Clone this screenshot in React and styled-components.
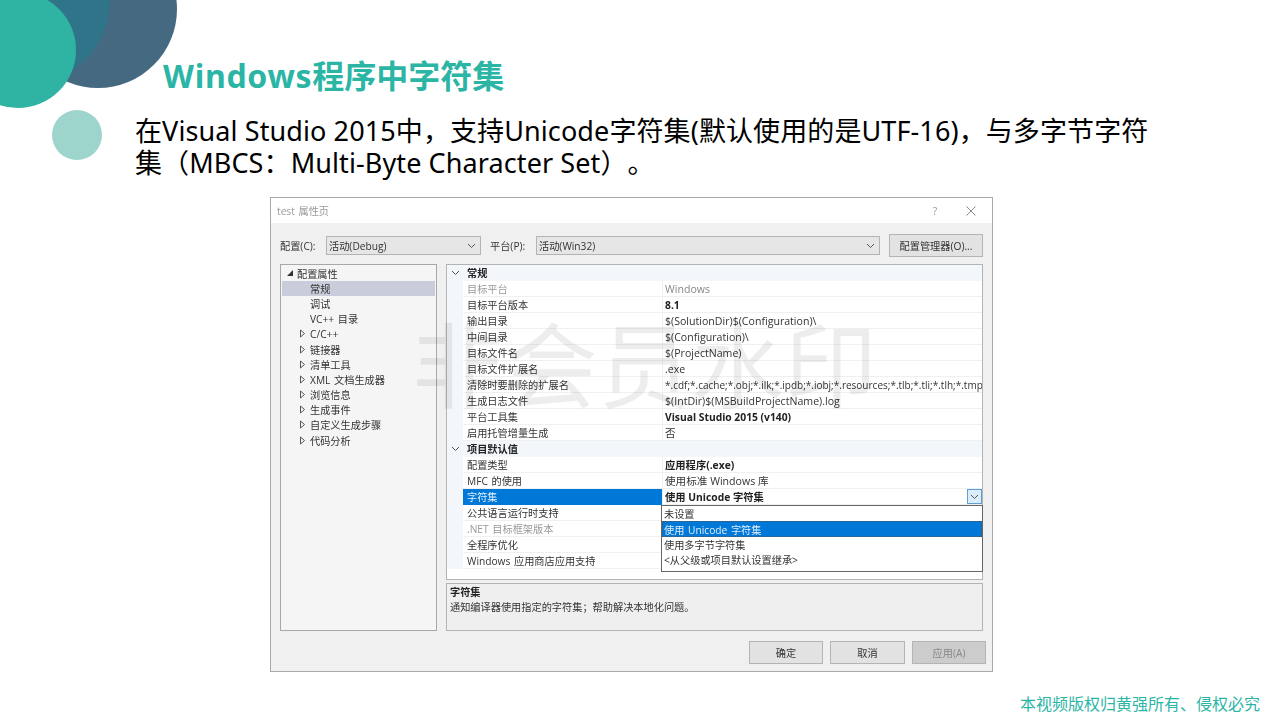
import styled, { createGlobalStyle } from "styled-components";

const Global = createGlobalStyle`
  html, body { margin: 0; padding: 0; background: #fff; }
  * { box-sizing: border-box; }
`;

const CJK = `"Open Sans", "Noto Sans CJK SC", sans-serif`;

const Slide = styled.div`
  position: relative;
  width: 1280px;
  height: 720px;
  overflow: hidden;
  background: #fff;
  font-family: "Noto Sans", "Noto Sans CJK SC", sans-serif;
  text-spacing-trim: space-all;
  display: flex;
  flex-direction: column;
  padding: 54px 0 0 0;
`;

const Circle = styled.div`
  position: absolute;
  left: ${(p) => p.$x - p.$r}px;
  top: ${(p) => p.$y - p.$r}px;
  width: ${(p) => p.$r * 2}px;
  height: ${(p) => p.$r * 2}px;
  border-radius: 50%;
  background: ${(p) => p.$color};
`;

const Title = styled.h1`
  margin: 0 0 0 163px;
  font-size: 32px;
  line-height: 44px;
  font-weight: 700;
  color: #2bb5a5;
`;

const TitleLatin = styled.span`
  letter-spacing: 0.7px;
`;

const Lead = styled.p`
  margin: 17px 0 18px 135px;
  width: 1030px;
  font-size: 27px;
  line-height: 32px;
  letter-spacing: 0.1px;
  color: #000;
`;

const Dialog = styled.div`
  position: relative;
  margin-left: 270px;
  width: 723px;
  height: 475px;
  border: 1px solid #a9a9a9;
  background: #f0f0f0;
  font-family: ${CJK};
  font-size: 10.2px;
  word-spacing: 1px;
  color: #333;
  display: flex;
  flex-direction: column;
  overflow: hidden;
  filter: blur(0.3px);
`;

const TitleBar = styled.div`
  height: 25px;
  flex: none;
  background: #fff;
  display: flex;
  align-items: center;
  padding: 0 15px 0 6px;
  color: #999;
`;

const TitleText = styled.span`
  flex: 1;
`;

const TitleBtn = styled.span`
  width: 12px;
  margin-left: 24px;
  display: flex;
  justify-content: center;
  color: #999;
`;

const ConfigRow = styled.div`
  display: flex;
  align-items: center;
  height: 23px;
  margin: 11px 9px 7px 9px;
`;

const ConfigLabel = styled.span`
  width: ${(p) => p.$w}px;
  flex: none;
`;

const Select = styled.div`
  width: ${(p) => p.$w}px;
  height: 19px;
  flex: none;
  margin-right: ${(p) => p.$mr || 0}px;
  border: 1px solid #b4b4b4;
  background: #e6e6e6;
  display: flex;
  align-items: center;
  justify-content: space-between;
  padding: 0 4px 0 2px;
`;

const Button = styled.div`
  width: ${(p) => p.$w}px;
  height: 23px;
  flex: none;
  display: flex;
  align-items: center;
  justify-content: center;
  border: 1px solid #b4b4b4;
  background: ${(p) => (p.$disabled ? "#ccc" : "#e2e2e2")};
  color: ${(p) => (p.$disabled ? "#888" : "#333")};
`;

const Main = styled.div`
  display: flex;
  margin: 0 9px;
  gap: 9px;
  height: 367px;
`;

const Tree = styled.div`
  width: 157px;
  flex: none;
  border: 1px solid #a8a8a8;
  background: #f5f5f5;
  padding: 0.5px 1px 1px;
`;

const TreeRow = styled.div`
  height: 15.2px;
  display: flex;
  align-items: center;
  padding-left: ${(p) => p.$indent}px;
  background: ${(p) => (p.$active ? "#c9ccda" : "transparent")};
`;

const TreeArrow = styled.span`
  width: 11px;
  flex: none;
  display: flex;
`;

const RightCol = styled.div`
  flex: none;
  width: 537px;
  min-width: 0;
  display: flex;
  flex-direction: column;
  gap: 3px;
`;

const Grid = styled.div`
  height: 316px;
  flex: none;
  border: 1px solid #b4b4b4;
  background: #fff;
  position: relative;
`;

const GroupRow = styled.div`
  height: 16px;
  display: flex;
  align-items: center;
  padding-bottom: 1px;
  background: #f3f7fb;
  font-weight: 700;
  color: #222;
`;

const Chevron = styled.span`
  width: 16px;
  margin-right: 4px;
  flex: none;
  display: flex;
  justify-content: center;
`;

const PropRow = styled.div`
  height: 16px;
  display: flex;
  background: linear-gradient(to right, #f3f7fb 16px, transparent 16px);
`;

const PropName = styled.div`
  width: 199px;
  margin-left: 16px;
  flex: none;
  display: flex;
  align-items: center;
  padding-left: 4px;
  border-bottom: 1px solid ${(p) => (p.$selected ? "#0078d7" : "#f0f0f0")};
  background: ${(p) => (p.$selected ? "#0078d7" : "transparent")};
  color: ${(p) => (p.$selected ? "#dfeefb" : p.$dim ? "#999" : "#333")};
`;

const PropValue = styled.div`
  flex: 1;
  min-width: 0;
  display: flex;
  align-items: center;
  justify-content: space-between;
  padding-left: 2px;
  border-left: 1px solid #f0f0f0;
  border-bottom: 1px solid #f0f0f0;
  font-size: ${(p) => (p.$tight ? 10 : p.$bold ? 10.3 : 10.6)}px;
  word-spacing: 0;
  font-weight: ${(p) => (p.$bold ? 700 : 400)};
  color: ${(p) => (p.$dim ? "#888" : p.$bold ? "#222" : "#333")};
  white-space: nowrap;
  overflow: hidden;
`;

const ComboArrow = styled.span`
  width: 15px;
  height: 15px;
  flex: none;
  border: 1px solid #5a9fd8;
  background: #dcecf9;
  display: flex;
  align-items: center;
  justify-content: center;
`;

const Dropdown = styled.div`
  position: absolute;
  left: 214px;
  top: 240px;
  width: 322px;
  height: 67px;
  background: #fff;
  border: 1px solid #666;
  color: #333;
`;

const DropItem = styled.div`
  height: ${(p) => (p.$active ? 16 : 15)}px;
  display: flex;
  align-items: center;
  padding-left: 2px;
  background: ${(p) => (p.$active ? "#0078d7" : "transparent")};
  color: ${(p) => (p.$active ? "#dfeefb" : "#333")};
  outline: ${(p) => (p.$active ? "1px dotted #555" : "none")};
  outline-offset: -1px;
`;

const Description = styled.div`
  flex: 1;
  border: 1px solid #b4b4b4;
  background: #efefef;
  padding: 1px 3px;
  line-height: 15px;
`;

const DescTitle = styled.div`
  font-weight: 700;
  color: #222;
`;

const ButtonRow = styled.div`
  display: flex;
  justify-content: flex-end;
  gap: 7px;
  margin: 10px 6px 0 0;
`;

const Watermark = styled.div`
  position: absolute;
  left: 412px;
  top: 301px;
  font-size: 93px;
  line-height: 120px;
  font-weight: 400;
  font-family: "Noto Sans CJK SC", sans-serif;
  color: rgba(0, 0, 0, 0.07);
  white-space: nowrap;
  pointer-events: none;
`;

const Copyright = styled.div`
  position: absolute;
  right: 20px;
  bottom: 6px;
  font-size: 16px;
  line-height: 20px;
  color: #2bb5a5;
`;

const Caret = () => (
  <svg width="9" height="6" viewBox="0 0 9 6">
    <path d="M1 1l3.5 3.5L8 1" fill="none" stroke="#555" strokeWidth="1" />
  </svg>
);

const Open = () => (
  <svg width="8" height="8" viewBox="0 0 8 8">
    <path d="M7 1v6H1z" fill="#333" />
  </svg>
);

const Closed = () => (
  <svg width="8" height="9" viewBox="0 0 8 9">
    <path d="M1.5 1l4 3.5-4 3.5z" fill="none" stroke="#555" strokeWidth="1" />
  </svg>
);

const treeItems = ["C/C++", "链接器", "清单工具", "XML 文档生成器", "浏览信息", "生成事件", "自定义生成步骤", "代码分析"];

const general = [
  { name: "目标平台", value: "Windows", dim: true },
  { name: "目标平台版本", value: "8.1", bold: true },
  { name: "输出目录", value: "$(SolutionDir)$(Configuration)\\" },
  { name: "中间目录", value: "$(Configuration)\\" },
  { name: "目标文件名", value: "$(ProjectName)" },
  { name: "目标文件扩展名", value: ".exe" },
  { name: "清除时要删除的扩展名", value: "*.cdf;*.cache;*.obj;*.ilk;*.ipdb;*.iobj;*.resources;*.tlb;*.tli;*.tlh;*.tmp;*.rsp", tight: true },
  { name: "生成日志文件", value: "$(IntDir)$(MSBuildProjectName).log" },
  { name: "平台工具集", value: "Visual Studio 2015 (v140)", bold: true },
  { name: "启用托管增量生成", value: "否" },
];

const defaults = [
  { name: "配置类型", value: "应用程序(.exe)", bold: true },
  { name: "MFC 的使用", value: "使用标准 Windows 库" },
  { name: "字符集", value: "使用 Unicode 字符集", bold: true, selected: true },
  { name: "公共语言运行时支持", value: "" },
  { name: ".NET 目标框架版本", value: "", nameDim: true },
  { name: "全程序优化", value: "" },
  { name: "Windows 应用商店应用支持", value: "" },
];

const Prop = ({ item }) => (
  <PropRow>
    <PropName $selected={item.selected} $dim={item.dim || item.nameDim}>{item.name}</PropName>
    <PropValue $bold={item.bold} $dim={item.dim} $tight={item.tight}>
      {item.value}
      {item.selected && <ComboArrow><Caret /></ComboArrow>}
    </PropValue>
  </PropRow>
);

export default function App() {
  return (
    <Slide>
      <Global />
      <Circle $x={98} $y={9} $r={79} $color="#466982" />
      <Circle $x={25} $y={0} $r={85} $color="#2f7489" />
      <Circle $x={18} $y={50} $r={58} $color="#2fb3a2" />
      <Circle $x={77} $y={135} $r={25} $color="#9dd5cc" />

      <Title><TitleLatin>Windows</TitleLatin>程序中字符集</Title>
      <Lead>在Visual Studio 2015中，支持Unicode字符集(默认使用的是UTF-16)，与多字节字符集（MBCS：Multi-Byte Character Set）。</Lead>

      <Dialog>
        <TitleBar>
          <TitleText>test 属性页</TitleText>
          <TitleBtn>?</TitleBtn>
          <TitleBtn>
            <svg width="10" height="10" viewBox="0 0 10 10">
              <path d="M0.5 0.5l9 9M9.5 0.5l-9 9" stroke="#888" strokeWidth="1" fill="none" />
            </svg>
          </TitleBtn>
        </TitleBar>

        <ConfigRow>
          <ConfigLabel $w={46}>配置(C):</ConfigLabel>
          <Select $w={155} $mr={9}>活动(Debug)<Caret /></Select>
          <ConfigLabel $w={46}>平台(P):</ConfigLabel>
          <Select $w={344} $mr={9}>活动(Win32)<Caret /></Select>
          <Button $w={94}>配置管理器(O)...</Button>
        </ConfigRow>

        <Main>
          <Tree>
            <TreeRow $indent={4}>
              <TreeArrow><Open /></TreeArrow>
              配置属性
            </TreeRow>
            <TreeRow $indent={28} $active>常规</TreeRow>
            <TreeRow $indent={28}>调试</TreeRow>
            <TreeRow $indent={28}>VC++ 目录</TreeRow>
            {treeItems.map((t) => (
              <TreeRow key={t} $indent={17}>
                <TreeArrow><Closed /></TreeArrow>
                {t}
              </TreeRow>
            ))}
          </Tree>

          <RightCol>
            <Grid>
              <GroupRow><Chevron><Caret /></Chevron>常规</GroupRow>
              {general.map((item) => <Prop key={item.name} item={item} />)}
              <GroupRow><Chevron><Caret /></Chevron>项目默认值</GroupRow>
              {defaults.map((item) => <Prop key={item.name} item={item} />)}
              <Dropdown>
                <DropItem>未设置</DropItem>
                <DropItem $active>使用 Unicode 字符集</DropItem>
                <DropItem>使用多字节字符集</DropItem>
                <DropItem>&lt;从父级或项目默认设置继承&gt;</DropItem>
              </Dropdown>
            </Grid>
            <Description>
              <DescTitle>字符集</DescTitle>
              通知编译器使用指定的字符集；帮助解决本地化问题。
            </Description>
          </RightCol>
        </Main>

        <ButtonRow>
          <Button $w={74}>确定</Button>
          <Button $w={75}>取消</Button>
          <Button $w={74} $disabled>应用(A)</Button>
        </ButtonRow>
      </Dialog>

      <Watermark>非会员水印</Watermark>
      <Copyright>本视频版权归黄强所有、侵权必究</Copyright>
    </Slide>
  );
}
